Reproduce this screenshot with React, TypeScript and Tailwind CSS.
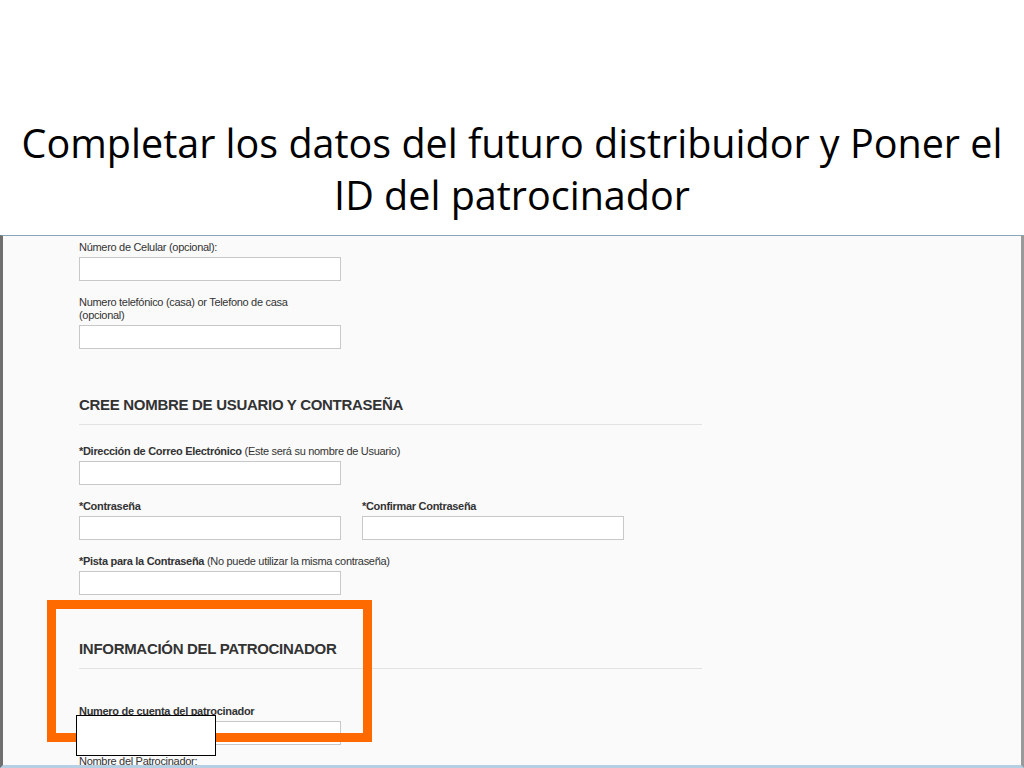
import React from "react";

function Field({
  label,
  note,
  bold = false,
  className = "",
}: {
  label: React.ReactNode;
  note?: string;
  bold?: boolean;
  className?: string;
}) {
  return (
    <div className={className}>
      <div className="text-[11px] leading-[13px] tracking-[-0.3px] text-[#333]">
        <span className={bold ? "font-bold" : ""}>{label}</span>
        {note && <span> {note}</span>}
      </div>
      <div className="mt-[3px] h-[24px] w-[262px] border border-[#c8c8c8] bg-white" />
    </div>
  );
}

function SectionTitle({ children, className = "" }: { children: React.ReactNode; className?: string }) {
  return (
    <div className={className}>
      <h2 className="text-[15px] font-bold leading-[20px] tracking-[-0.3px] text-[#333]">{children}</h2>
      <div className="mt-[9px] h-px w-[623px] bg-[#e2e2e2]" />
    </div>
  );
}

export default function App() {
  return (
    <div
      className="relative h-[768px] w-[1024px] overflow-hidden bg-white"
      style={{ fontFamily: '"Liberation Sans", Arial, sans-serif' }}
    >
      <div
        className="pt-[117px] text-center text-[39.5px] leading-[52px] text-black"
        style={{ fontFamily: '"Open Sans", sans-serif' }}
      >
        <p>Completar los datos del futuro distribuidor y Poner el</p>
        <p>ID del patrocinador</p>
      </div>

      <div className="mt-[14px] h-[533px] overflow-hidden border-t border-l-[3px] border-r-[3px] border-b-[3px] border-t-[#8aa4b8] border-l-[#6f6f6f] border-r-[#9a9a9a] border-b-[#b7cfe3] bg-[#fafafa]">
        <div className="pl-[76px] pt-[5px]">
          <Field label="Número de Celular (opcional):" />
          <Field
            className="mt-[15px]"
            label={
              <>
                Numero telefónico (casa) or Telefono de casa
                <br />
                (opcional)
              </>
            }
          />

          <SectionTitle className="mt-[46px]">CREE NOMBRE DE USUARIO Y CONTRASEÑA</SectionTitle>

          <Field
            className="mt-[20px]"
            bold
            label="*Dirección de Correo Electrónico"
            note="(Este será su nombre de Usuario)"
          />
          <div className="mt-[15px] flex gap-[21px]">
            <Field bold label="*Contraseña" />
            <Field bold label="*Confirmar Contraseña" />
          </div>
          <Field
            className="mt-[15px]"
            bold
            label="*Pista para la Contraseña"
            note="(No puede utilizar la misma contraseña)"
          />

          <SectionTitle className="mt-[44px]">INFORMACIÓN DEL PATROCINADOR</SectionTitle>

          <Field className="mt-[36px]" bold label="Numero de cuenta del patrocinador" />
          <div className="mt-[10px] text-[11px] leading-[13px] tracking-[-0.3px] text-[#333]">Nombre del Patrocinador:</div>
        </div>
      </div>

      {/* highlight + redaction */}
      <div className="absolute left-[47px] top-[600px] h-[142px] w-[325px] border-[9px] border-[#ff6a00]" />
      <div className="absolute left-[76px] top-[715px] h-[41px] w-[140px] border border-black bg-white" />
    </div>
  );
}
